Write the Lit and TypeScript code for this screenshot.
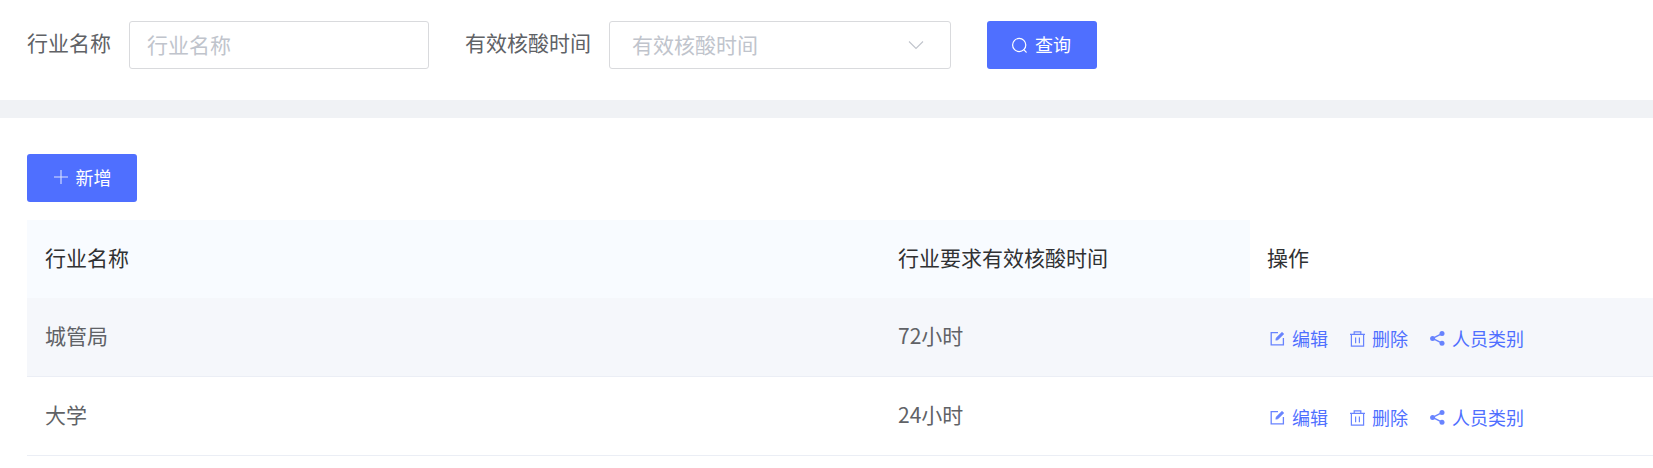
import { LitElement, css, html } from 'lit';
import { customElement } from 'lit/decorators.js';

const searchIcon = html`<svg class="icon search" viewBox="0 0 17 17" fill="none" stroke="currentColor" stroke-width="1.2">
  <circle cx="8.2" cy="8" r="6.6" /><path d="M13 12.8l2.2 2.4" stroke-linecap="round" />
</svg>`;

const plusIcon = html`<svg class="icon" viewBox="0 0 16 16" fill="none" stroke="currentColor" stroke-width="1.1" opacity="0.8">
  <path d="M8 1v14M1 8h14" />
</svg>`;

const chevronIcon = html`<svg class="chevron" viewBox="0 0 16 10" fill="none" stroke="currentColor" stroke-width="1.1">
  <path d="M1 1.5l7 7 7-7" />
</svg>`;

const editIcon = html`<svg class="op-icon" viewBox="0 0 15 15" fill="none" stroke="currentColor" stroke-width="1.3">
  <path d="M8 1.6H1.2v12.2h12.2V7" />
  <path d="M5.8 9.2l.4-2.2L12 1.2l1.8 1.8L8 8.8z" fill="currentColor" stroke-width="0.6" />
</svg>`;

const trashIcon = html`<svg class="op-icon trash" viewBox="0 0 15 16" fill="none" stroke="currentColor" stroke-width="1.2">
  <path d="M0 3.4h15M4.2 3.2V0.8h6.6v2.4M1.4 3.4v11.8h12.2V3.4M5.6 6.4v5.8M9.4 6.4v5.8" />
</svg>`;

const shareIcon = html`<svg class="op-icon" viewBox="0 0 15 15" fill="currentColor" stroke="currentColor">
  <circle cx="2.6" cy="7.4" r="2.5" stroke="none" />
  <circle cx="12" cy="2.6" r="2.5" stroke="none" />
  <circle cx="12" cy="12.2" r="2.5" stroke="none" />
  <path d="M2.6 7.4L12 2.6M2.6 7.4l9.4 4.8" stroke-width="1.4" />
</svg>`;

@customElement('app-root')
export class AppRoot extends LitElement {
  static styles = css`
    :host {
      display: block;
      background: #ffffff;
      color: #606266;
      font-family: 'Noto Sans CJK SC', 'Liberation Sans', sans-serif;
      font-size: 21px;
      height: 468px;
      overflow: hidden;
    }

    .filters {
      align-items: center;
      box-sizing: border-box;
      display: flex;
      height: 100px;
      padding: 0 0 10px 27px;
    }

    .label {
      line-height: 42px;
      margin-right: 18px;
      padding-bottom: 6px;
      white-space: nowrap;
    }

    .input,
    .select {
      align-items: center;
      border: 1px solid #d9dadd;
      border-radius: 3px;
      box-sizing: border-box;
      color: #c0c4cc;
      display: flex;
      height: 48px;
      padding-bottom: 2px;
    }

    .input {
      margin-right: 36px;
      padding-left: 17px;
      width: 300px;
    }

    .select {
      justify-content: space-between;
      margin-right: 36px;
      padding-left: 22px;
      padding-right: 26px;
      width: 342px;
    }

    .chevron {
      color: #c0c4cc;
      height: 10px;
      margin-top: 2px;
      width: 16px;
    }

    .btn {
      align-items: center;
      background: #4f6fff;
      border-radius: 3px;
      box-sizing: border-box;
      color: #ffffff;
      display: flex;
      font-size: 18px;
      gap: 7px;
      height: 48px;
      justify-content: center;
      padding-bottom: 2px;
      width: 110px;
    }

    .icon {
      height: 16px;
      width: 16px;
    }

    .icon.search {
      height: 17px;
      margin-left: -2px;
      margin-top: 2px;
      width: 17px;
    }

    .band {
      background: #f0f2f5;
      height: 18px;
    }

    .content {
      padding: 36px 0 0 27px;
    }

    .table {
      margin-top: 18px;
    }

    .row {
      display: grid;
      grid-template-columns: 853px 370px 1fr;
    }

    .cell {
      align-items: center;
      border-bottom: 1px solid #ebeef5;
      box-sizing: border-box;
      display: flex;
      height: 79px;
      padding-bottom: 4px;
      padding-left: 18px;
    }

    .head .cell {
      background: #f8fbff;
      border-bottom: none;
      color: #303133;
      height: 78px;
      padding-bottom: 5px;
    }

    .head .cell:last-child {
      background: #ffffff;
      padding-left: 17px;
    }

    .row.striped .cell {
      background: #f5f7fb;
    }

    .cell.ops {
      color: #4f6fff;
      font-size: 18px;
      gap: 22px;
      padding-bottom: 0;
      padding-left: 20px;
      padding-top: 2px;
    }

    .op {
      align-items: center;
      display: flex;
      gap: 7px;
    }

    .op-icon {
      height: 15px;
      margin-top: 1px;
      opacity: 0.85;
      width: 15px;
    }

    .op-icon.trash {
      height: 16px;
    }
  `;

  private rows = [
    { name: '城管局', hours: '72小时' },
    { name: '大学', hours: '24小时' },
  ];

  render() {
    return html`
      <div class="filters">
        <span class="label">行业名称</span>
        <div class="input">行业名称</div>
        <span class="label">有效核酸时间</span>
        <div class="select"><span>有效核酸时间</span>${chevronIcon}</div>
        <div class="btn">${searchIcon}<span>查询</span></div>
      </div>
      <div class="band"></div>
      <div class="content">
        <div class="btn">${plusIcon}<span>新增</span></div>
        <div class="table">
          <div class="row head">
            <div class="cell">行业名称</div>
            <div class="cell">行业要求有效核酸时间</div>
            <div class="cell">操作</div>
          </div>
          ${this.rows.map(
            (row, i) => html`
              <div class="row ${i === 0 ? 'striped' : ''}">
                <div class="cell">${row.name}</div>
                <div class="cell">${row.hours}</div>
                <div class="cell ops">
                  <span class="op">${editIcon}编辑</span>
                  <span class="op">${trashIcon}删除</span>
                  <span class="op">${shareIcon}人员类别</span>
                </div>
              </div>
            `,
          )}
        </div>
      </div>
    `;
  }
}
